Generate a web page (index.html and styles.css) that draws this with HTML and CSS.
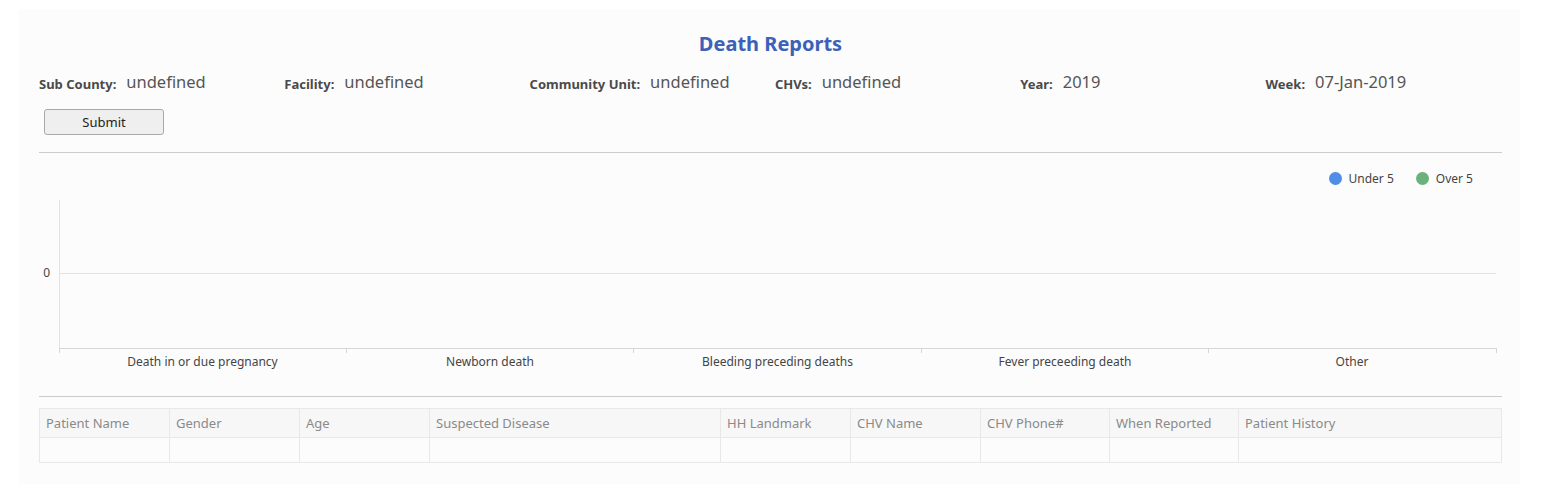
FILE: index.html
```html
<!DOCTYPE html>
<html lang="en">
<head>
<meta charset="utf-8">
<title>Death Reports</title>
<link rel="stylesheet" href="styles.css">
</head>
<body>
<div class="card">
  <h1 class="title">Death Reports</h1>
  <div class="filters">
    <div class="filter"><span class="label">Sub County:</span><span class="value">undefined</span></div>
    <div class="filter"><span class="label">Facility:</span><span class="value">undefined</span></div>
    <div class="filter"><span class="label">Community Unit:</span><span class="value">undefined</span></div>
    <div class="filter"><span class="label">CHVs:</span><span class="value">undefined</span></div>
    <div class="filter"><span class="label">Year:</span><span class="value">2019</span></div>
    <div class="filter"><span class="label">Week:</span><span class="value">07-Jan-2019</span></div>
  </div>
  <div class="actions"><button class="submit" type="button">Submit</button></div>
  <hr class="rule">
  <div class="legend">
    <span class="legend-item"><span class="dot dot-blue"></span>Under 5</span>
    <span class="legend-item"><span class="dot dot-green"></span>Over 5</span>
  </div>
  <svg class="chart" width="1462" height="210" viewBox="0 0 1462 210">
    <g stroke="#e3e3e3" stroke-width="1" fill="none" shape-rendering="crispEdges">
      <line x1="20.5" y1="14" x2="20.5" y2="162"/>
      <line x1="20" y1="87.5" x2="1457" y2="87.5"/>
    </g>
    <g stroke="#d6d6d6" stroke-width="1" fill="none" shape-rendering="crispEdges">
      <line x1="20" y1="162.5" x2="1458" y2="162.5"/>
      <line x1="20.5" y1="162" x2="20.5" y2="167"/>
      <line x1="307.5" y1="162" x2="307.5" y2="167"/>
      <line x1="594.5" y1="162" x2="594.5" y2="167"/>
      <line x1="882.5" y1="162" x2="882.5" y2="167"/>
      <line x1="1169.5" y1="162" x2="1169.5" y2="167"/>
      <line x1="1457.5" y1="162" x2="1457.5" y2="167"/>
    </g>
    <g class="axis-text">
      <text x="11" y="91" text-anchor="end">0</text>
      <text x="163.5" y="180" text-anchor="middle">Death in or due pregnancy</text>
      <text x="451" y="180" text-anchor="middle">Newborn death</text>
      <text x="738.5" y="180" text-anchor="middle">Bleeding preceding deaths</text>
      <text x="1026" y="180" text-anchor="middle">Fever preceeding death</text>
      <text x="1313" y="180" text-anchor="middle">Other</text>
    </g>
  </svg>
  <hr class="rule">
  <table class="grid">
    <colgroup>
      <col class="c130"><col class="c130"><col class="c130"><col class="c291"><col class="c130"><col class="c130"><col class="c129"><col class="c129"><col>
    </colgroup>
    <thead>
      <tr>
        <th>Patient Name</th><th>Gender</th><th>Age</th><th>Suspected Disease</th><th>HH Landmark</th><th>CHV Name</th><th>CHV Phone#</th><th>When Reported</th><th>Patient History</th>
      </tr>
    </thead>
    <tbody>
      <tr><td></td><td></td><td></td><td></td><td></td><td></td><td></td><td></td><td></td></tr>
    </tbody>
  </table>
</div>
</body>
</html>
```
FILE: styles.css
```css
* { box-sizing: border-box; }
html, body { margin: 0; padding: 0; background: #ffffff; }
body {
  font-family: "Noto Sans", "Open Sans", sans-serif;
  color: #444;
}
.card {
  margin: 9px 21px 10px 19px;
  background: #fcfcfc;
  padding: 22px 18px 21px 20px;
}
.title {
  margin: 0;
  text-align: center;
  font-size: 20px;
  line-height: 26px;
  font-weight: 700;
  color: #3b62b8;
}
.filters {
  margin-top: 14px;
  display: grid;
  grid-template-columns: repeat(6, 245.3px);
  height: 20px;
  align-items: center;
}
.filter { display: flex; align-items: baseline; white-space: nowrap; }
.label { font-size: 13px; font-weight: 700; color: #4a4a4a; margin-right: 10px; }
.value { font-size: 16.5px; color: #555; position: relative; top: -1px; }
.actions { margin-top: 18px; padding-left: 5px; }
.submit {
  width: 120px;
  height: 26px;
  background: #efefef;
  border: 1px solid #a9a9a9;
  border-radius: 3px;
  font-family: inherit;
  font-size: 13px;
  color: #222;
  padding: 0;
}
.rule { margin: 0; border: 0; border-top: 1px solid #cccccc; }
.actions + .rule { margin-top: 17px; }
.legend {
  margin-top: 17px;
  height: 16px;
  display: flex;
  justify-content: flex-end;
  align-items: center;
  gap: 22px;
  padding-right: 29px;
  font-size: 12px;
  color: #444;
}
.legend-item { display: flex; align-items: center; gap: 7px; }
.dot { width: 13px; height: 13px; border-radius: 50%; display: inline-block; }
.dot-blue { background: #4e8de8; }
.dot-green { background: #6cb17b; }
.chart { display: block; }
.axis-text text { font-size: 12px; fill: #444; font-family: "Noto Sans", "Open Sans", sans-serif; }
.grid {
  margin-top: 11px;
  width: 100%;
  border-collapse: collapse;
  table-layout: fixed;
  font-size: 13px;
}
.c130 { width: 130px; }
.c129 { width: 129px; }
.c291 { width: 291px; }
.grid th, .grid td { border: 1px solid #e8e8e8; padding: 0 6px; text-align: left; }
.grid th { height: 29px; background: #f7f7f7; font-weight: 400; color: #8a8a8a; }
.grid td { height: 25px; background: #fcfcfc; }
```
